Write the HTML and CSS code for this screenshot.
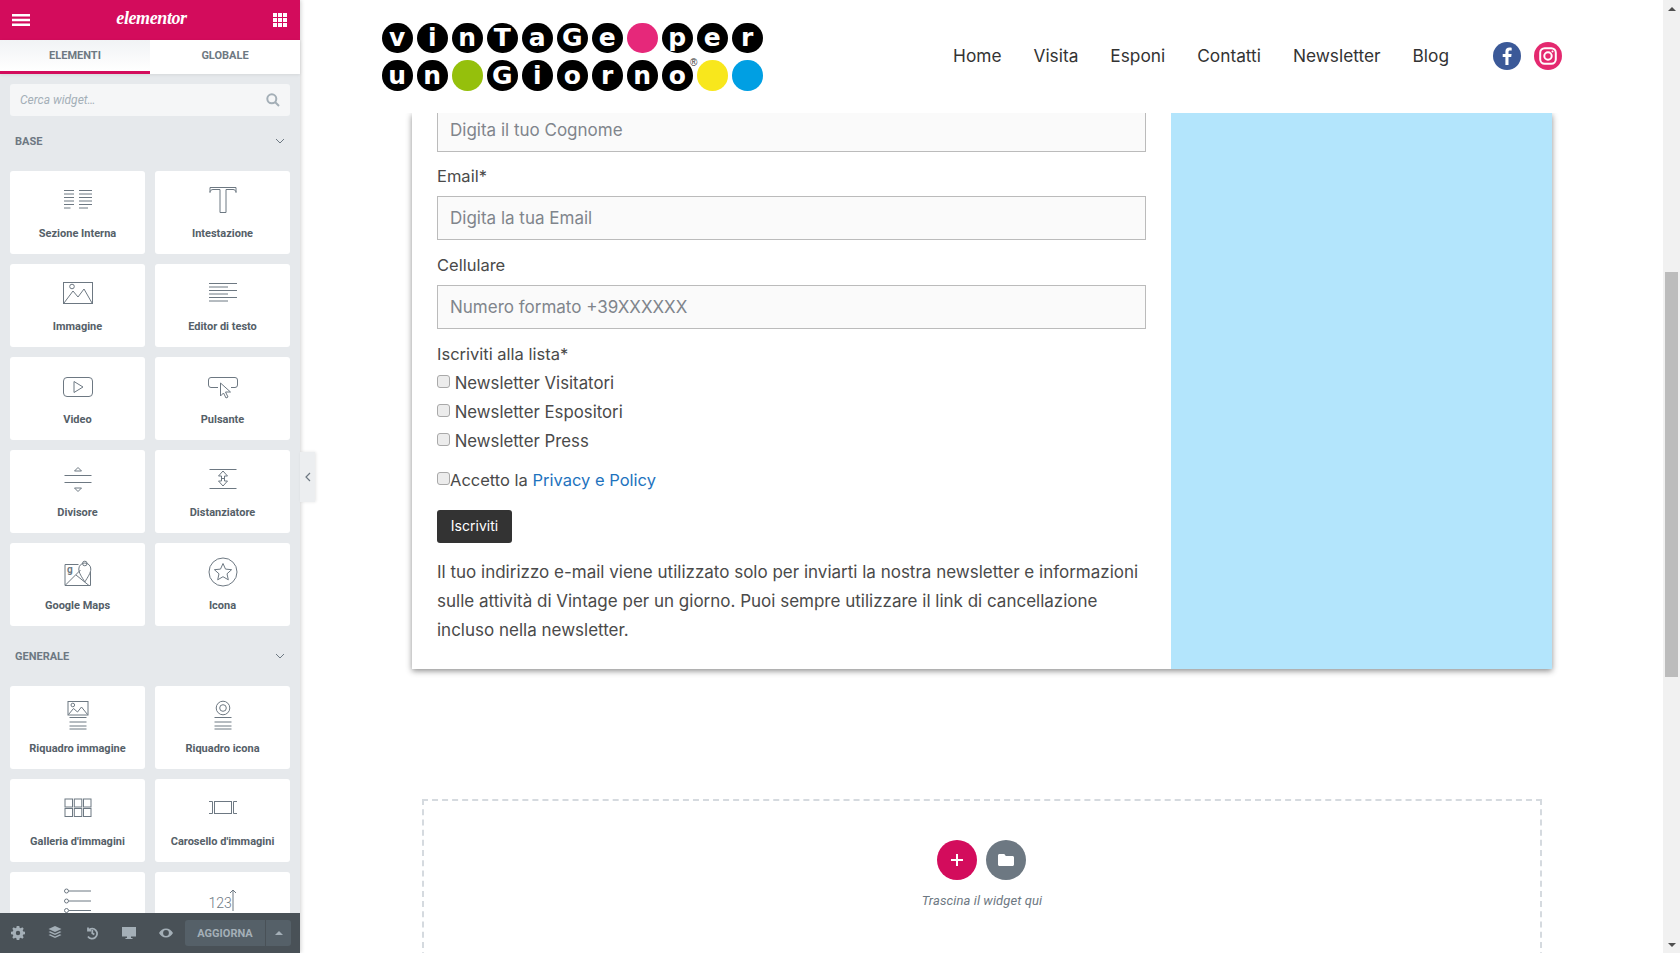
FILE: index.html
```html
<!DOCTYPE html>
<html lang="it">
<head>
    <meta charset="UTF-8">
    <meta name="viewport" content="width=device-width, initial-scale=1.0">
    <title>Elementor - Newsletter</title>
    <link rel="stylesheet" href="styles.css">
</head>
<body>
    <aside class="panel">
        <div class="panel-header">
            <svg class="panel-menu" width="18" height="12" viewBox="0 0 18 12"><path d="M0 0h18v2.4H0zM0 4.8h18v2.4H0zM0 9.600h18V12H0z"/></svg>
            <span class="panel-logo">elementor</span>
            <svg class="panel-apps" width="14" height="14" viewBox="0 0 14 14"><path d="M0 0h4v4H0zM5 0h4v4H5zM10 0h4v4h-4zM0 5h4v4H0zM5 5h4v4H5zM10 5h4v4h-4zM0 10h4v4H0zM5 10h4v4H5zM10 10h4v4h-4z"/></svg>
        </div>
        <div class="panel-tabs">
            <div class="panel-tab active">ELEMENTI</div>
            <div class="panel-tab">GLOBALE</div>
        </div>
        <div class="panel-scroll">
            <div class="panel-search">
                <input type="text" placeholder="Cerca widget…">
                <svg width="14" height="14" viewBox="0 0 14 14"><circle cx="5.800" cy="5.800" r="4.500"/><path d="M9 9l4 4"/></svg>
            </div>
            <div class="panel-title first">BASE<svg width="10" height="6" viewBox="0 0 10 6"><path d="M1 1l4 4 4-4"/></svg></div>
            <div class="widgets">
                <div class="widget">
                    <svg class="ico" viewBox="0 0 40 40"><path d="M6 10.500h10M6 14h10M6 17.500h10M6 21h10M6 24.500h10M6 28h6.500M21 10.500h13M21 14h13M21 17.500h13M21 21h13M21 24.500h13M21 28h9"/></svg>
                    <span>Sezione Interna</span>
                </div>
                <div class="widget">
                    <svg class="ico" viewBox="0 0 40 40"><path d="M7 12.500V7.500h26v5c0-2-1.500-3-3-3h-7v23h-6v-23h-7c-1.500 0-3 1-3 3z"/></svg>
                    <span>Intestazione</span>
                </div>
                <div class="widget">
                    <svg class="ico" viewBox="0 0 40 40"><rect x="5.500" y="9.500" width="29" height="21"/><path d="M6 30l9-12 5 6 6-8 8 14"/><circle cx="14" cy="13.500" r="2.300"/></svg>
                    <span>Immagine</span>
                </div>
                <div class="widget">
                    <svg class="ico" viewBox="0 0 40 40"><path d="M6 10.500h28M6 14h19M6 17.500h28M6 21h19M6 24.500h28M6 28h19"/></svg>
                    <span>Editor di testo</span>
                </div>
                <div class="widget">
                    <svg class="ico" viewBox="0 0 40 40"><rect x="5.500" y="11.500" width="29" height="19" rx="3.500"/><path d="M16 15.500l9 5.500-9 5.500z"/></svg>
                    <span>Video</span>
                </div>
                <div class="widget">
                    <svg class="ico" viewBox="0 0 40 40"><path d="M15 21.500H8a2.500 2.500 0 0 1-2.500-2.500v-5A2.500 2.500 0 0 1 8 11.500h24a2.500 2.500 0 0 1 2.500 2.500v5a2.500 2.500 0 0 1-2.500 2.500h-4"/><path d="M17.500 17v13l3-3 2.500 5 2-1-2.500-5h5z"/></svg>
                    <span>Pulsante</span>
                </div>
                <div class="widget">
                    <svg class="ico" viewBox="0 0 40 40"><path d="M6.500 16.500h27M6.500 23.500h27M20 8.500l3.500 3.500h-7zM20 32.500l3.500-3.500h-7z"/></svg>
                    <span>Divisore</span>
                </div>
                <div class="widget">
                    <svg class="ico" viewBox="0 0 40 40"><path d="M6.500 10.500h27M6.500 29.500h27M20 12l4.500 5h-3v5h3l-4.500 5-4.500-5h3v-5h-3zM18.500 19.500h3"/></svg>
                    <span>Distanziatore</span>
                </div>
                <div class="widget">
                    <svg class="ico" viewBox="0 0 40 40"><path d="M20.500 12.500H7v21h25.500V20M7.500 33l15-15M18 23l13 10.500M26.800 30c-3-5-6-9-6-13a6 6 0 0 1 12 0c0 4-3 8-6 13z"/><circle cx="26.800" cy="11.500" r="2.300"/><text class="ico-g" x="9" y="20.500">g</text></svg>
                    <span>Google Maps</span>
                </div>
                <div class="widget">
                    <svg class="ico" viewBox="0 0 40 40"><circle cx="20" cy="20" r="14"/><path d="M20 11.500l2.500 5.600 6.100.6-4.600 4.100 1.300 6-5.300-3.100-5.300 3.100 1.300-6-4.600-4.100 6.100-.6z"/></svg>
                    <span>Icona</span>
                </div>
            </div>
            <div class="panel-title">GENERALE<svg width="10" height="6" viewBox="0 0 10 6"><path d="M1 1l4 4 4-4"/></svg></div>
            <div class="widgets">
                <div class="widget">
                    <svg class="ico" viewBox="0 0 40 40"><rect x="10" y="6.500" width="20" height="13.500"/><path d="M10.500 19.500l5-6 4 3.500 4-5 6 7.500"/><circle cx="14.800" cy="10" r="1.800"/><path d="M11.500 22.500h17M11.500 27h17M11.500 31h17M11.500 34h17"/></svg>
                    <span>Riquadro immagine</span>
                </div>
                <div class="widget">
                    <svg class="ico" viewBox="0 0 40 40"><circle cx="20" cy="13" r="6.800"/><circle cx="20" cy="13" r="3.300"/><path d="M11.500 22.500h17M11.500 27h17M11.500 31h17M11.500 34h17"/></svg>
                    <span>Riquadro icona</span>
                </div>
                <div class="widget">
                    <svg class="ico" viewBox="0 0 40 40"><rect x="7" y="11" width="7.500" height="8"/><rect x="16.300" y="11" width="7.500" height="8"/><rect x="25.500" y="11" width="7.500" height="8"/><rect x="7" y="20.500" width="7.500" height="8"/><rect x="16.300" y="20.500" width="7.500" height="8"/><rect x="25.500" y="20.500" width="7.500" height="8"/></svg>
                    <span>Galleria d'immagini</span>
                </div>
                <div class="widget">
                    <svg class="ico" viewBox="0 0 40 40"><rect x="11.500" y="13.500" width="17" height="12"/><path d="M6 13.500h3.500v12H6M34 13.500h-3.500v12H34"/></svg>
                    <span>Carosello d'immagini</span>
                </div>
                <div class="widget">
                    <svg class="ico" viewBox="0 0 40 40"><circle cx="8.500" cy="10" r="2"/><circle cx="8.500" cy="20" r="2"/><circle cx="8.500" cy="29.500" r="2"/><path d="M11 10h22M11 20h22M11 29.500h22"/></svg>
                </div>
                <div class="widget">
                    <svg class="ico" viewBox="0 0 40 40"><text class="ico-num" x="5.500" y="26.500">123</text><path d="M30 30V9M27 12l3-3 3 3"/></svg>
                </div>
            </div>
        </div>
        <div class="panel-footer">
            <svg class="tool" width="14" height="14" viewBox="0 0 14 14"><path fill-rule="evenodd" d="M5.700 0h2.600l.3 1.800 1.200.5L11.300 1.300l1.400 1.400-1 1.500.5 1.200 1.800.3v2.600l-1.800.3-.5 1.200 1 1.500-1.400 1.400-1.500-1-1.200.5-.3 1.800H5.700l-.3-1.800-1.200-.5-1.500 1-1.400-1.400 1-1.500-.5-1.200L0 8.300V5.700l1.800-.3.500-1.200-1-1.500 1.400-1.400 1.500 1 1.200-.5zM7 4.800a2.200 2.200 0 1 0 0 4.400 2.200 2.200 0 0 0 0-4.400z"/></svg>
            <svg class="tool" width="14" height="14" viewBox="0 0 14 14"><path d="M7 0l6.500 3L7 6 .5 3zM2.200 5.300L7 7.500l4.800-2.200 1.700.8L7 9 .5 6.100zM2.200 8.300L7 10.500l4.800-2.200 1.700.8L7 12 .5 9.100z"/></svg>
            <svg class="tool tool-line" width="14" height="14" viewBox="0 0 14 14"><path d="M3 1.500v3h3M3.500 4.200A5 5 0 1 1 3 10.500M7.300 4v3.300l2 1.300"/></svg>
            <svg class="tool" width="14" height="14" viewBox="0 0 14 14"><path d="M0 1h14v9.500H0zM5 10.500h4V12h1.500v1h-7v-1H5z"/></svg>
            <svg class="tool" width="14" height="14" viewBox="0 0 14 14"><path fill-rule="evenodd" d="M7 2.500c3 0 5.600 1.800 7 4.500-1.400 2.700-4 4.500-7 4.500S1.400 9.700 0 7c1.400-2.700 4-4.500 7-4.500zm0 1.600a2.900 2.900 0 1 0 0 5.800 2.900 2.900 0 0 0 0-5.800z"/></svg>
            <div class="save">
                <div class="save-main">AGGIORNA</div>
                <div class="save-more"><i></i></div>
            </div>
        </div>
        <div class="panel-toggle"><svg width="6" height="10" viewBox="0 0 6 10"><path d="M5 1L1 5l4 4"/></svg></div>
    </aside>

    <main class="page">
        <header class="site-header">
            <div class="logo">
                <div class="logo-row">
                    <span class="dot">v</span><span class="dot">i</span><span class="dot">n</span><span class="dot">T</span><span class="dot">a</span><span class="dot">G</span><span class="dot">e</span><span class="dot pink"></span><span class="dot">p</span><span class="dot">e</span><span class="dot">r</span>
                </div>
                <div class="logo-row">
                    <span class="dot">u</span><span class="dot">n</span><span class="dot green"></span><span class="dot">G</span><span class="dot">i</span><span class="dot">o</span><span class="dot">r</span><span class="dot">n</span><span class="dot">o</span><span class="dot yellow"></span><span class="dot blue"></span>
                </div>
                <span class="logo-reg">®</span>
            </div>
            <nav class="site-nav">
                <a href="#">Home</a>
                <a href="#">Visita</a>
                <a href="#">Esponi</a>
                <a href="#">Contatti</a>
                <a href="#">Newsletter</a>
                <a href="#">Blog</a>
            </nav>
            <div class="social">
                <a class="social-fb" href="#"><svg width="10" height="18" viewBox="0 0 10 18"><path d="M6.500 18V10h2.700l.4-3.100H6.500V5c0-.9.300-1.500 1.600-1.500h1.600V.7C9.400.6 8.500.5 7.400.5 5 .5 3.400 2 3.400 4.600v2.300H.7V10h2.700v8z"/></svg></a>
                <a class="social-ig" href="#"><svg width="18" height="18" viewBox="0 0 18 18"><rect x="1.200" y="1.200" width="15.600" height="15.600" rx="4.500"/><circle cx="9" cy="9" r="3.700"/><circle class="ig-dot" cx="13.500" cy="4.500" r="1"/></svg></a>
            </div>
        </header>

        <section class="signup">
            <form class="signup-form">
                <input class="field first" type="text" placeholder="Digita il tuo Cognome">
                <label class="field-label" for="email">Email*</label>
                <input class="field" type="email" id="email" placeholder="Digita la tua Email">
                <label class="field-label" for="cell">Cellulare</label>
                <input class="field" type="tel" id="cell" placeholder="Numero formato +39XXXXXX">
                <div class="field-label list-label">Iscriviti alla lista*</div>
                <label class="check"><input type="checkbox"> Newsletter Visitatori</label>
                <label class="check"><input type="checkbox"> Newsletter Espositori</label>
                <label class="check"><input type="checkbox"> Newsletter Press</label>
                <label class="check privacy"><input type="checkbox">Accetto la&nbsp;<a href="#">Privacy e Policy</a></label>
                <button type="button" class="submit">Iscriviti</button>
                <p class="note">Il tuo indirizzo e-mail viene utilizzato solo per inviarti la nostra newsletter e informazioni sulle attività di Vintage per un giorno. Puoi sempre utilizzare il link di cancellazione incluso nella newsletter.</p>
            </form>
            <div class="signup-side"></div>
        </section>

        <section class="dropzone">
            <div class="drop-buttons">
                <div class="drop-btn add"><svg width="14" height="14" viewBox="0 0 14 14"><path d="M6 1h2v5h5v2H8v5H6V8H1V6h5z"/></svg></div>
                <div class="drop-btn folder"><svg width="16" height="14" viewBox="0 0 16 14"><path d="M1.500 1h4.800l1.500 2h6.700c.8 0 1.500.7 1.500 1.500v7c0 .8-.7 1.500-1.500 1.500h-13C.7 13 0 12.300 0 11.500v-9C0 1.700.7 1 1.500 1z"/></svg></div>
            </div>
            <div class="drop-text">Trascina il widget qui</div>
        </section>
    </main>

    <div class="scrollbar">
        <div class="scroll-arrow up"></div>
        <div class="scroll-track"><div class="scroll-thumb"></div></div>
        <div class="scroll-arrow down"></div>
    </div>
</body>
</html>
```

FILE: styles.css
```css
html, body {
    margin: 0;
    padding: 0;
    height: 953px;
    overflow: hidden;
}

body {
    display: flex;
    background-color: #ffffff;
    font-family: Roboto, Arial, sans-serif;
}

/* Pannello laterale */
.panel {
    position: relative;
    z-index: 2;
    width: 300px;
    height: 953px;
    flex: none;
    display: flex;
    flex-direction: column;
    background-color: #e6e9ec;
    box-shadow: 1px 0 4px rgba(0, 0, 0, 0.18);
}

.panel-header {
    height: 40px;
    flex: none;
    display: flex;
    align-items: center;
    justify-content: space-between;
    padding: 0 13px 0 12px;
    background-color: #d30c5c;
}

.panel-menu, .panel-apps {
    fill: #ffffff;
}

.panel-logo {
    color: #ffffff;
    font-family: "Liberation Serif", serif;
    font-style: italic;
    font-weight: bold;
    font-size: 18px;
    letter-spacing: -0.4px;
    margin-top: -3px;
}

.panel-tabs {
    height: 34px;
    flex: none;
    display: flex;
    background-color: #ffffff;
    box-shadow: 0 1px 3px rgba(0, 0, 0, 0.08);
}

.panel-tab {
    width: 50%;
    box-sizing: border-box;
    text-align: center;
    color: #6d7882;
    font-size: 11px;
    font-weight: 700;
    line-height: 32px;
}

.panel-tab.active {
    border-bottom: 3px solid #d30c5c;
    background: linear-gradient(#f1f3f5, #ffffff);
}

.panel-scroll {
    flex: 1;
    overflow: hidden;
    padding: 10px 10px 0;
}

.panel-search {
    height: 32px;
    display: flex;
    align-items: center;
    justify-content: space-between;
    padding: 0 10px;
    border-radius: 3px;
    background-color: #f5f6f7;
}

.panel-search input {
    flex: 1;
    min-width: 0;
    padding: 0;
    border: none;
    outline: none;
    background: none;
    font-family: Roboto, Arial, sans-serif;
    font-size: 12px;
    font-style: italic;
}

.panel-search input::placeholder {
    color: #a4afb7;
    opacity: 1;
}

.panel-search svg {
    fill: none;
    stroke: #a4afb7;
    stroke-width: 2;
}

.panel-title {
    display: flex;
    align-items: center;
    justify-content: space-between;
    height: 14px;
    margin: 23px 0 23px;
    padding: 0 5px;
    color: #6d7882;
    font-size: 11px;
    font-weight: 700;
}

.panel-title.first {
    margin-top: 18px;
}

.panel-title svg {
    fill: none;
    stroke: #6d7882;
    stroke-width: 1;
}

.widgets {
    display: grid;
    grid-template-columns: 135px 135px;
    gap: 10px;
}

.widget {
    height: 83px;
    display: flex;
    flex-direction: column;
    align-items: center;
    padding-top: 9px;
    box-sizing: border-box;
    border-radius: 3px;
    background-color: #ffffff;
    color: #556068;
    font-size: 11px;
    font-weight: 700;
}

.widget span {
    margin-top: 7px;
    line-height: 14px;
}

.ico {
    width: 40px;
    height: 40px;
    flex: none;
    fill: none;
    stroke: #6d7882;
    stroke-width: 1;
}

.ico-g {
    fill: #6d7882;
    stroke: none;
    font-family: Roboto, Arial, sans-serif;
    font-size: 10px;
}

.ico-num {
    fill: #6d7882;
    stroke: none;
    font-family: Roboto, Arial, sans-serif;
    font-size: 14px;
    font-weight: 300;
}

.panel-footer {
    height: 40px;
    flex: none;
    display: flex;
    align-items: center;
    gap: 23px;
    padding: 0 9px 0 11px;
    background-color: #495157;
}

.tool {
    fill: #a4afb7;
}

.tool-line {
    fill: none;
    stroke: #a4afb7;
    stroke-width: 1.800;
}

.save {
    display: flex;
    margin-left: -11px;
    height: 26px;
    border-radius: 3px;
    overflow: hidden;
    color: #a4afb7;
    font-size: 11px;
    font-weight: 700;
    line-height: 27px;
}

.save-main {
    width: 80px;
    text-align: center;
    background-color: #556068;
}

.save-more {
    width: 25px;
    margin-left: 1px;
    display: flex;
    align-items: center;
    justify-content: center;
    background-color: #556068;
}

.save-more i {
    width: 0;
    height: 0;
    border-left: 4px solid transparent;
    border-right: 4px solid transparent;
    border-bottom: 4px solid #a4afb7;
}

.panel-toggle {
    position: absolute;
    left: 300px;
    top: 452px;
    width: 15px;
    height: 50px;
    display: flex;
    align-items: center;
    justify-content: center;
    background-color: #eceef0;
    box-shadow: 1px 0 3px rgba(0, 0, 0, 0.1);
}

.panel-toggle svg {
    fill: none;
    stroke: #6d7882;
    stroke-width: 1.200;
}

/* Pagina */
.page {
    flex: 1;
    min-width: 0;
    height: 953px;
    overflow: hidden;
    color: #4a4a4a;
    font-family: Inter, "Open Sans", Arial, sans-serif;
}

.site-header {
    position: relative;
    z-index: 1;
    height: 113px;
    box-sizing: border-box;
    display: flex;
    align-items: center;
    padding: 0 101px 0 82px;
    background-color: #ffffff;
}

.logo {
    position: relative;
    display: flex;
    flex-direction: column;
    gap: 7px;
}

.logo-row {
    display: flex;
    gap: 4.500px;
}

.dot {
    width: 30.500px;
    height: 30.500px;
    display: flex;
    align-items: center;
    justify-content: center;
    border-radius: 50%;
    background-color: #000000;
    color: #ffffff;
    font-family: "DejaVu Sans", sans-serif;
    font-size: 25px;
    font-weight: bold;
    line-height: 1;
}

.dot.pink { background-color: #e6287a; }
.dot.green { background-color: #95c00c; }
.dot.yellow { background-color: #f8e71c; }
.dot.blue { background-color: #009fe3; }

.logo-reg {
    position: absolute;
    left: 308px;
    top: 34px;
    color: #333333;
    font-family: "Liberation Sans", sans-serif;
    font-size: 10px;
    line-height: 12px;
}

.site-nav {
    display: flex;
    gap: 32px;
    margin: 0 0 2px auto;
}

.site-nav a {
    color: #333333;
    font-size: 17.300px;
    text-decoration: none;
}

.social {
    display: flex;
    gap: 13px;
    margin: 0 0 2px 44px;
}

.social a {
    width: 28px;
    height: 28px;
    display: flex;
    align-items: center;
    justify-content: center;
    border-radius: 50%;
}

.social-fb {
    background-color: #3b5998;
}

.social-fb svg {
    fill: #ffffff;
}

.social-ig {
    background-color: #e4296f;
}

.social-ig svg {
    fill: none;
    stroke: #ffffff;
    stroke-width: 2;
}

.social-ig .ig-dot {
    fill: #ffffff;
    stroke: none;
}

.signup {
    display: flex;
    width: 1140px;
    margin-left: 112px;
    box-shadow: 0 2px 6px rgba(0, 0, 0, 0.45);
}

.signup-form {
    width: 759px;
    flex: none;
    box-sizing: border-box;
    padding: 0 25px 24px;
    background-color: #ffffff;
}

.signup-side {
    flex: 1;
    background-color: #b3e5fc;
}

.field {
    display: block;
    width: 100%;
    height: 44px;
    box-sizing: border-box;
    padding: 0 12px;
    border: 1px solid #bbbbbb;
    background-color: #fafafa;
    color: #444444;
    font-family: Inter, "Open Sans", Arial, sans-serif;
    font-size: 17px;
    outline: none;
}

.field.first {
    height: 39px;
    margin-bottom: -1px;
    padding-bottom: 5px;
    border-top: none;
}

.field::placeholder {
    color: #80858c;
    opacity: 1;
}

.field-label {
    display: block;
    margin: 13px 0 8px;
    font-size: 16.500px;
    line-height: 24px;
}

.list-label {
    margin-bottom: 2px;
}

.check {
    display: flex;
    align-items: center;
    height: 29px;
    font-size: 16.800px;
    white-space: pre;
}

.check input {
    appearance: none;
    width: 13px;
    height: 13px;
    flex: none;
    margin: 0 0 2px 0;
    border: 1px solid #a9a9a9;
    border-radius: 3px;
    background-color: #ececec;
}

.check.privacy {
    margin-top: 10px;
    font-size: 16.500px;
}

.check a {
    color: #1e73be;
    text-decoration: none;
}

.submit {
    display: block;
    width: 75px;
    height: 33px;
    margin-top: 16px;
    padding: 0 0 2px;
    border: none;
    border-radius: 3px;
    background-color: #333333;
    color: #ffffff;
    font-family: Inter, "Open Sans", Arial, sans-serif;
    font-size: 14px;
}

.note {
    margin: 15px 0 0;
    font-size: 17px;
    line-height: 29px;
}

.dropzone {
    height: 200px;
    box-sizing: border-box;
    width: 1120px;
    margin: 130px 0 0 122px;
    padding-top: 39px;
    border: 2px dashed #d5dadf;
    text-align: center;
}

.drop-buttons {
    display: flex;
    justify-content: center;
    gap: 9px;
    padding-right: 1px;
}

.drop-btn {
    width: 40px;
    height: 40px;
    display: flex;
    align-items: center;
    justify-content: center;
    border-radius: 50%;
}

.drop-btn svg {
    fill: #ffffff;
}

.drop-btn.add {
    background-color: #d30c5c;
}

.drop-btn.folder {
    background-color: #6d7882;
}

.drop-text {
    margin-top: 13px;
    color: #6d7882;
    font-family: Roboto, Arial, sans-serif;
    font-size: 13px;
    font-style: italic;
    letter-spacing: 0.1px;
    line-height: 16px;
}

/* Barra di scorrimento */
.scrollbar {
    width: 17px;
    flex: none;
    height: 953px;
    display: flex;
    flex-direction: column;
    background-color: #f1f1f1;
}

.scroll-arrow {
    height: 17px;
    flex: none;
    display: flex;
    align-items: center;
    justify-content: center;
}

.scroll-arrow.up::before {
    content: "";
    border-left: 4px solid transparent;
    border-right: 4px solid transparent;
    border-bottom: 4px solid #505050;
}

.scroll-arrow.down::before {
    content: "";
    border-left: 4px solid transparent;
    border-right: 4px solid transparent;
    border-top: 4px solid #505050;
}

.scroll-track {
    flex: 1;
    padding: 255px 2px 0;
}

.scroll-thumb {
    height: 405px;
    background-color: #bcbcbc;
}
```
